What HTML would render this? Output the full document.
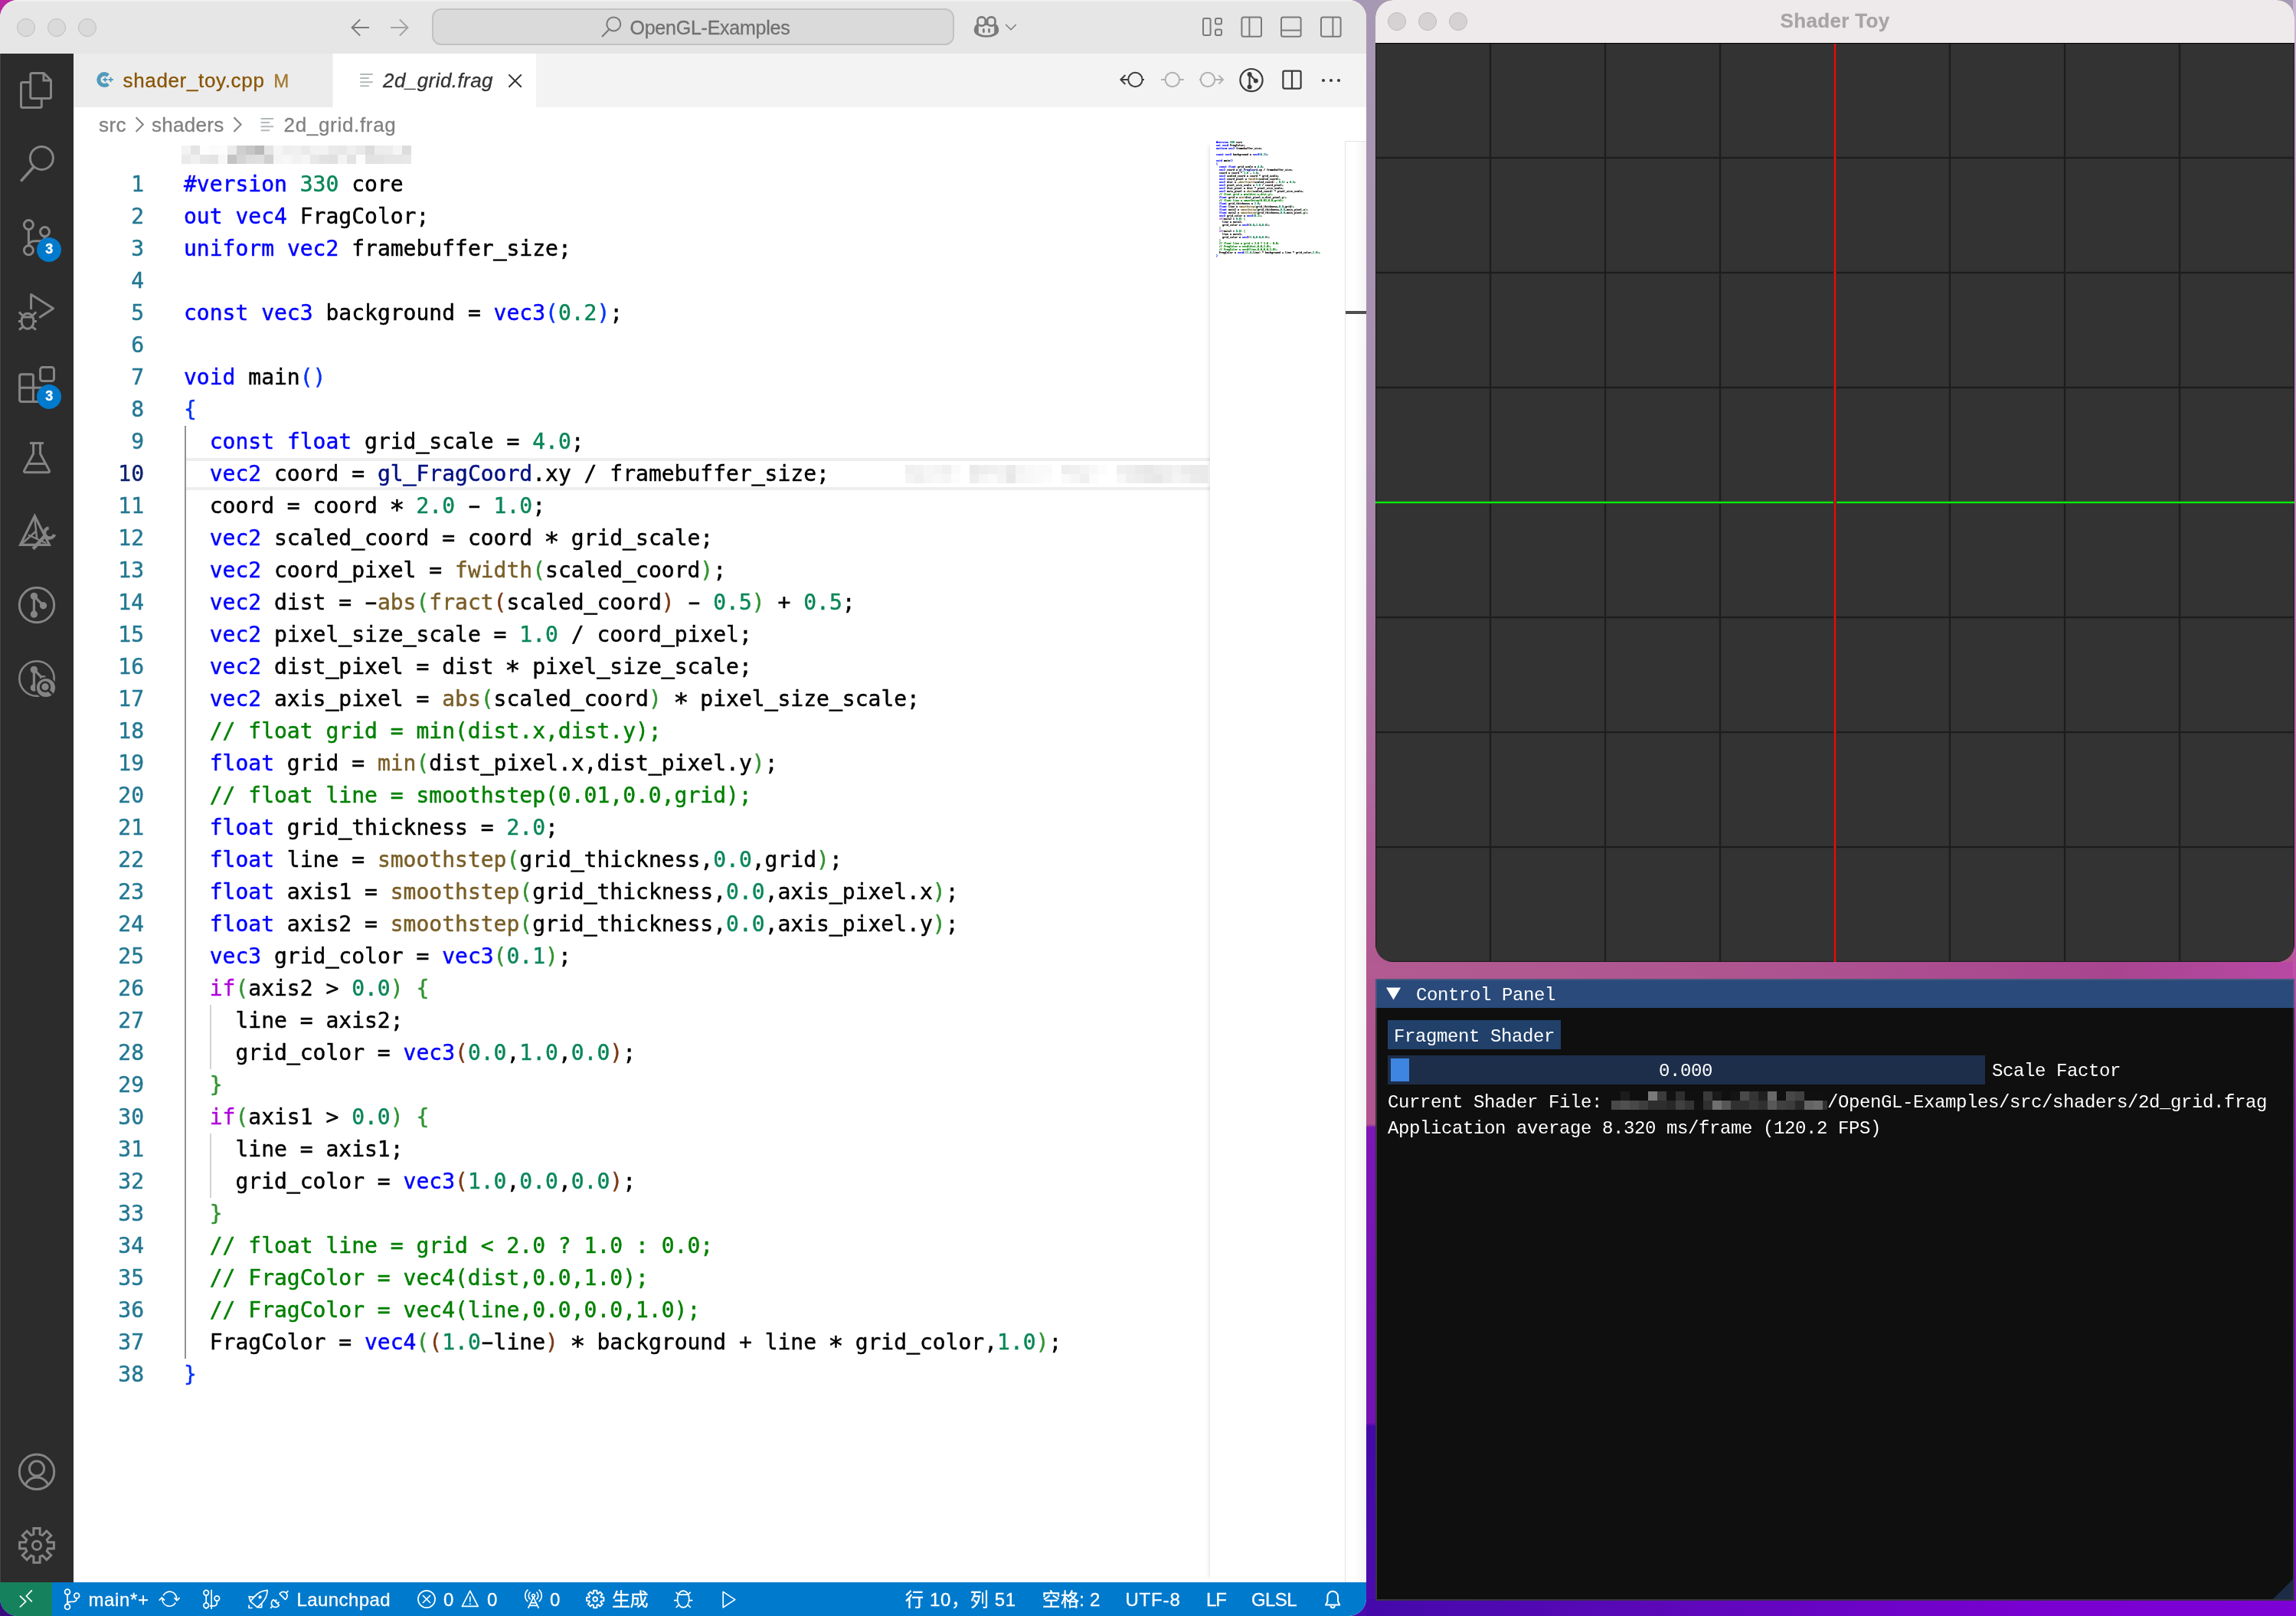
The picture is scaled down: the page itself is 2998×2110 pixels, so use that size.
<!DOCTYPE html>
<html lang="zh-CN">
<head>
<meta charset="utf-8">
<title>2d_grid.frag - OpenGL-Examples</title>
<style>
*{box-sizing:border-box;margin:0;padding:0}
html,body{width:2998px;height:2110px;overflow:hidden}
body{position:relative;font-family:"Liberation Sans","Noto Sans CJK SC",sans-serif;
 background:linear-gradient(to bottom,#a799b3 0,#a68cad 600px,#b0629a 1100px,#b2568f 1300px,#b1548f 1468px,#7c16b7 1472px,#7412b4 1858px,#4409a9 1862px,#4a0bb0 2110px)}
.abs,.lb{position:absolute}
.lb{white-space:pre;display:block;-webkit-text-stroke:0.3px currentColor}
#strip1{position:absolute;left:1784px;top:1256px;width:1214px;height:22px;background:linear-gradient(to right,#b25a91 0,#ae5590 40%,#a8458f 80%,#b848a4 100%)}
#strip2{position:absolute;left:1784px;top:2088px;width:1214px;height:22px;background:linear-gradient(to right,#4409aa 0,#5a08b8 30%,#7800d0 70%,#7d00d6 100%)}
#stripr{position:absolute;left:2994px;top:0;width:4px;height:2110px;background:linear-gradient(to bottom,#c9b6d3 0,#c050a8 1270px,#9a20c0 1500px,#7d00d6 2110px)}
#cornertl{position:absolute;left:0;top:0;width:26px;height:26px;background:#b9259f}
#cornerbl{position:absolute;left:0;top:2084px;width:26px;height:26px;background:#3a0a80}
/* ---------- VS Code ---------- */
#vsc{position:absolute;left:0;top:0;width:1784px;height:2110px;border-radius:23px;overflow:hidden;background:#fff}
#titlebar{position:absolute;left:0;top:0;width:1784px;height:70px;background:#e6e6e6;box-shadow:inset 0 1.5px 0 #f3f3f3}
.tl{position:absolute;top:24px;width:24px;height:24px;border-radius:50%;background:#dadada;border:1px solid #bdbdbd}
#cmd{position:absolute;left:564px;top:11px;width:682px;height:48px;border-radius:12px;background:#dadada;border:2px solid #c2c2c2}
#activity{position:absolute;left:0;top:70px;width:96px;height:1996px;background:#2c2c2c}
#tabs{position:absolute;left:96px;top:70px;width:1688px;height:70px;background:#f3f3f3}
#tab1{position:absolute;left:0;top:0;width:338px;height:70px;background:#ececec}
#tab2{position:absolute;left:339px;top:0;width:265px;height:70px;background:#fff}
#crumbs{position:absolute;left:96px;top:140px;width:1688px;height:44px;background:#fff}
#editor{position:absolute;left:96px;top:184px;width:1688px;height:1882px;background:#fff}
#gutter{will-change:transform;position:absolute;left:0;top:36px;width:92px;text-align:right;color:#237893}
#gutter .act{color:#0b216f}
#code{will-change:transform;position:absolute;left:144px;top:36px;color:#000}
.ln{-webkit-text-stroke:0.45px currentColor;height:42px;line-height:42px;font:28px/42px "DejaVu Sans Mono","Liberation Mono",monospace;white-space:pre}
.k{color:#0000ff}.n{color:#098658}.f{color:#795e26}.c{color:#008000}.p{color:#af00db}.v{color:#001080}
.b1{color:#0431fa}.b2{color:#319331}.b3{color:#7b3814}
#curline{position:absolute;left:145px;top:414px;width:1339px;height:42px;border-top:4px solid #eeeeee;border-bottom:4px solid #eeeeee}
.guide{position:absolute;width:2px;background:#d3d3d3}
#minimap{position:absolute;left:1484px;top:0;width:173px;height:1882px;background:#fff;box-shadow:-6px 0 6px -6px rgba(0,0,0,.18)}
#mini{will-change:transform;position:absolute;left:8px;top:0px;-webkit-text-stroke:3px currentColor;transform-origin:0 0;transform:scale(0.11865,0.095238);color:#000;font-weight:bold}
#ruler{position:absolute;left:1660px;top:0;width:28px;height:1882px;border-left:1px solid #e2e2e2;border-top:1px solid #e2e2e2;background:linear-gradient(to right,#fff 0,#fff 40%,#f4f4f4 100%)}
#rulermark{position:absolute;left:1661px;top:222px;width:27px;height:4px;background:#4f4f4f}
#status{position:absolute;left:0;top:2066px;width:1784px;height:44px;background:#007acc}
#remote{position:absolute;left:0;top:0;width:68px;height:44px;background:#16825d}
.blur{position:absolute}
/* ---------- Shader Toy ---------- */
#toy{position:absolute;left:1796px;top:0;width:1200px;height:1256px;border-radius:23px;overflow:hidden;background:#333}
#toybar{position:absolute;left:0;top:0;width:1200px;height:56px;background:#eeeaeb}
.tl2{position:absolute;top:16px;width:24px;height:24px;border-radius:50%;background:#d6d2d3;border:1px solid #bdb9ba}
#canvas{position:absolute;left:0;top:56px;width:1200px;height:1200px;background:repeating-linear-gradient(to right,#1d1d1d 0 1px,#2f2f2f 1px 2px,#333 2px 148px,#2f2f2f 148px 149px,#1d1d1d 149px 150px),repeating-linear-gradient(to bottom,#1d1d1d 0 1px,#2f2f2f 1px 2px,#333 2px 148px,#2f2f2f 148px 149px,#1d1d1d 149px 150px),#333;background-blend-mode:darken,darken,normal}
#axg{position:absolute;left:0;top:598px;width:1200px;height:4px;background:linear-gradient(to bottom,#2b532b 0 1px,#06ee06 1px 3px,#2b532b 3px 4px)}
#axr{position:absolute;left:598px;top:0;width:4px;height:1200px;background:linear-gradient(to right,#532b2b 0 1px,#f20606 1px 3px,#532b2b 3px 4px)}
/* ---------- ImGui ---------- */
#imgui{will-change:transform;position:absolute;left:1796px;top:1278px;width:1200px;height:812px;background:#0f0f0f;color:#fff;
 font:24px/28px "Liberation Mono","DejaVu Sans Mono",monospace;letter-spacing:-0.4px}
#imtitle{position:absolute;left:0;top:0;width:1200px;height:38px;background:#294a7a}
#imborder{position:absolute;left:0;top:0;width:1200px;height:812px;box-shadow:inset 0 0 0 2px rgba(110,110,128,.42)}
#imgui .t{position:absolute;white-space:pre;height:28px}
#imbtn{position:absolute;left:16px;top:54px;width:226px;height:38px;background:#21416b}
#imslider{position:absolute;left:16px;top:100px;width:780px;height:38px;background:#1d2e4b}
#imgrab{position:absolute;left:20px;top:104px;width:24px;height:30px;background:#3d85e0}
#imgrip{position:absolute;right:2px;bottom:2px;width:0;height:0;border-left:26px solid transparent;border-bottom:26px solid #1c2c46}
svg#ov{position:absolute;left:0;top:0;width:2998px;height:2110px;pointer-events:none}
#labels{position:absolute;left:0;top:0;width:2998px;height:2110px;will-change:transform}
#edge{position:absolute;left:0;top:70px;width:1px;height:1996px;background:#454545}
#mini .ln{-webkit-text-stroke:2.2px currentColor}
#toyline{position:absolute;left:0;top:56px;width:1200px;height:1px;background:#060606}
.ln i{font-style:normal}
.u{position:relative;top:-1.5px;-webkit-text-stroke:1.2px currentColor}
.as{display:inline-block;transform:translateY(5.5px) scale(1.2)}
.hy{display:inline-block;transform:scaleX(1.8)}

</style>
</head>
<body>
<div id="strip1"></div><div id="strip2"></div><div id="stripr"></div><div id="cornertl"></div><div id="cornerbl"></div>
<div id="vsc">
 <div id="titlebar">
  <div class="tl" style="left:22px"></div><div class="tl" style="left:62px"></div><div class="tl" style="left:102px"></div>
  <div id="cmd"></div>
 </div>
 <div id="activity"></div><div id="edge"></div>
 <div id="tabs"><div id="tab1"></div><div id="tab2"></div></div>
 <div id="crumbs"></div>
 <div id="editor">
  <div id="curline"></div>
  <div class="guide" style="left:145px;top:372px;height:1218px;background:#939393"></div>
  <div class="guide" style="left:178px;top:1128px;height:84px"></div>
  <div class="guide" style="left:178px;top:1296px;height:84px"></div>
  <div id="gutter">
<div class="ln">1</div>
<div class="ln">2</div>
<div class="ln">3</div>
<div class="ln">4</div>
<div class="ln">5</div>
<div class="ln">6</div>
<div class="ln">7</div>
<div class="ln">8</div>
<div class="ln">9</div>
<div class="ln act">10</div>
<div class="ln">11</div>
<div class="ln">12</div>
<div class="ln">13</div>
<div class="ln">14</div>
<div class="ln">15</div>
<div class="ln">16</div>
<div class="ln">17</div>
<div class="ln">18</div>
<div class="ln">19</div>
<div class="ln">20</div>
<div class="ln">21</div>
<div class="ln">22</div>
<div class="ln">23</div>
<div class="ln">24</div>
<div class="ln">25</div>
<div class="ln">26</div>
<div class="ln">27</div>
<div class="ln">28</div>
<div class="ln">29</div>
<div class="ln">30</div>
<div class="ln">31</div>
<div class="ln">32</div>
<div class="ln">33</div>
<div class="ln">34</div>
<div class="ln">35</div>
<div class="ln">36</div>
<div class="ln">37</div>
<div class="ln">38</div>
  </div>
  <div id="code">
<div class="ln"><span class="k">#version</span> <span class="n">330</span> core</div>
<div class="ln"><span class="k">out</span> <span class="k">vec4</span> FragColor;</div>
<div class="ln"><span class="k">uniform</span> <span class="k">vec2</span> framebuffer<i class="u">_</i>size;</div>
<div class="ln">&nbsp;</div>
<div class="ln"><span class="k">const</span> <span class="k">vec3</span> background = <span class="k">vec3</span><span class="b1">(</span><span class="n">0.2</span><span class="b1">)</span>;</div>
<div class="ln">&nbsp;</div>
<div class="ln"><span class="k">void</span> main<span class="b1">()</span></div>
<div class="ln"><span class="b1">{</span></div>
<div class="ln">  <span class="k">const</span> <span class="k">float</span> grid<i class="u">_</i>scale = <span class="n">4.0</span>;</div>
<div class="ln">  <span class="k">vec2</span> coord = <span class="v">gl<i class="u">_</i>FragCoord</span>.xy / framebuffer<i class="u">_</i>size;</div>
<div class="ln">  coord = coord <i class="as">*</i> <span class="n">2.0</span> <i class="hy">-</i> <span class="n">1.0</span>;</div>
<div class="ln">  <span class="k">vec2</span> scaled<i class="u">_</i>coord = coord <i class="as">*</i> grid<i class="u">_</i>scale;</div>
<div class="ln">  <span class="k">vec2</span> coord<i class="u">_</i>pixel = <span class="f">fwidth</span><span class="b2">(</span>scaled<i class="u">_</i>coord<span class="b2">)</span>;</div>
<div class="ln">  <span class="k">vec2</span> dist = <i class="hy">-</i><span class="f">abs</span><span class="b2">(</span><span class="f">fract</span><span class="b3">(</span>scaled<i class="u">_</i>coord<span class="b3">)</span> <i class="hy">-</i> <span class="n">0.5</span><span class="b2">)</span> + <span class="n">0.5</span>;</div>
<div class="ln">  <span class="k">vec2</span> pixel<i class="u">_</i>size<i class="u">_</i>scale = <span class="n">1.0</span> / coord<i class="u">_</i>pixel;</div>
<div class="ln">  <span class="k">vec2</span> dist<i class="u">_</i>pixel = dist <i class="as">*</i> pixel<i class="u">_</i>size<i class="u">_</i>scale;</div>
<div class="ln">  <span class="k">vec2</span> axis<i class="u">_</i>pixel = <span class="f">abs</span><span class="b2">(</span>scaled<i class="u">_</i>coord<span class="b2">)</span> <i class="as">*</i> pixel<i class="u">_</i>size<i class="u">_</i>scale;</div>
<div class="ln">  <span class="c">// float grid = min(dist.x,dist.y);</span></div>
<div class="ln">  <span class="k">float</span> grid = <span class="f">min</span><span class="b2">(</span>dist<i class="u">_</i>pixel.x,dist<i class="u">_</i>pixel.y<span class="b2">)</span>;</div>
<div class="ln">  <span class="c">// float line = smoothstep(0.01,0.0,grid);</span></div>
<div class="ln">  <span class="k">float</span> grid<i class="u">_</i>thickness = <span class="n">2.0</span>;</div>
<div class="ln">  <span class="k">float</span> line = <span class="f">smoothstep</span><span class="b2">(</span>grid<i class="u">_</i>thickness,<span class="n">0.0</span>,grid<span class="b2">)</span>;</div>
<div class="ln">  <span class="k">float</span> axis1 = <span class="f">smoothstep</span><span class="b2">(</span>grid<i class="u">_</i>thickness,<span class="n">0.0</span>,axis<i class="u">_</i>pixel.x<span class="b2">)</span>;</div>
<div class="ln">  <span class="k">float</span> axis2 = <span class="f">smoothstep</span><span class="b2">(</span>grid<i class="u">_</i>thickness,<span class="n">0.0</span>,axis<i class="u">_</i>pixel.y<span class="b2">)</span>;</div>
<div class="ln">  <span class="k">vec3</span> grid<i class="u">_</i>color = <span class="k">vec3</span><span class="b2">(</span><span class="n">0.1</span><span class="b2">)</span>;</div>
<div class="ln">  <span class="p">if</span><span class="b2">(</span>axis2 &gt; <span class="n">0.0</span><span class="b2">)</span> <span class="b2">{</span></div>
<div class="ln">    line = axis2;</div>
<div class="ln">    grid<i class="u">_</i>color = <span class="k">vec3</span><span class="b3">(</span><span class="n">0.0</span>,<span class="n">1.0</span>,<span class="n">0.0</span><span class="b3">)</span>;</div>
<div class="ln">  <span class="b2">}</span></div>
<div class="ln">  <span class="p">if</span><span class="b2">(</span>axis1 &gt; <span class="n">0.0</span><span class="b2">)</span> <span class="b2">{</span></div>
<div class="ln">    line = axis1;</div>
<div class="ln">    grid<i class="u">_</i>color = <span class="k">vec3</span><span class="b3">(</span><span class="n">1.0</span>,<span class="n">0.0</span>,<span class="n">0.0</span><span class="b3">)</span>;</div>
<div class="ln">  <span class="b2">}</span></div>
<div class="ln">  <span class="c">// float line = grid &lt; 2.0 ? 1.0 : 0.0;</span></div>
<div class="ln">  <span class="c">// FragColor = vec4(dist,0.0,1.0);</span></div>
<div class="ln">  <span class="c">// FragColor = vec4(line,0.0,0.0,1.0);</span></div>
<div class="ln">  FragColor = <span class="k">vec4</span><span class="b2">(</span><span class="b3">(</span><span class="n">1.0</span><i class="hy">-</i>line<span class="b3">)</span> <i class="as">*</i> background + line <i class="as">*</i> grid<i class="u">_</i>color,<span class="n">1.0</span><span class="b2">)</span>;</div>
<div class="ln"><span class="b1">}</span></div>
  </div>
  <div id="minimap"><div id="mini">
<div class="ln"><span class="k">#version</span> <span class="n">330</span> core</div>
<div class="ln"><span class="k">out</span> <span class="k">vec4</span> FragColor;</div>
<div class="ln"><span class="k">uniform</span> <span class="k">vec2</span> framebuffer_size;</div>
<div class="ln">&nbsp;</div>
<div class="ln"><span class="k">const</span> <span class="k">vec3</span> background = <span class="k">vec3</span><span class="b1">(</span><span class="n">0.2</span><span class="b1">)</span>;</div>
<div class="ln">&nbsp;</div>
<div class="ln"><span class="k">void</span> main<span class="b1">()</span></div>
<div class="ln"><span class="b1">{</span></div>
<div class="ln">  <span class="k">const</span> <span class="k">float</span> grid_scale = <span class="n">4.0</span>;</div>
<div class="ln">  <span class="k">vec2</span> coord = <span class="v">gl_FragCoord</span>.xy / framebuffer_size;</div>
<div class="ln">  coord = coord * <span class="n">2.0</span> - <span class="n">1.0</span>;</div>
<div class="ln">  <span class="k">vec2</span> scaled_coord = coord * grid_scale;</div>
<div class="ln">  <span class="k">vec2</span> coord_pixel = <span class="f">fwidth</span><span class="b2">(</span>scaled_coord<span class="b2">)</span>;</div>
<div class="ln">  <span class="k">vec2</span> dist = -<span class="f">abs</span><span class="b2">(</span><span class="f">fract</span><span class="b3">(</span>scaled_coord<span class="b3">)</span> - <span class="n">0.5</span><span class="b2">)</span> + <span class="n">0.5</span>;</div>
<div class="ln">  <span class="k">vec2</span> pixel_size_scale = <span class="n">1.0</span> / coord_pixel;</div>
<div class="ln">  <span class="k">vec2</span> dist_pixel = dist * pixel_size_scale;</div>
<div class="ln">  <span class="k">vec2</span> axis_pixel = <span class="f">abs</span><span class="b2">(</span>scaled_coord<span class="b2">)</span> * pixel_size_scale;</div>
<div class="ln">  <span class="c">// float grid = min(dist.x,dist.y);</span></div>
<div class="ln">  <span class="k">float</span> grid = <span class="f">min</span><span class="b2">(</span>dist_pixel.x,dist_pixel.y<span class="b2">)</span>;</div>
<div class="ln">  <span class="c">// float line = smoothstep(0.01,0.0,grid);</span></div>
<div class="ln">  <span class="k">float</span> grid_thickness = <span class="n">2.0</span>;</div>
<div class="ln">  <span class="k">float</span> line = <span class="f">smoothstep</span><span class="b2">(</span>grid_thickness,<span class="n">0.0</span>,grid<span class="b2">)</span>;</div>
<div class="ln">  <span class="k">float</span> axis1 = <span class="f">smoothstep</span><span class="b2">(</span>grid_thickness,<span class="n">0.0</span>,axis_pixel.x<span class="b2">)</span>;</div>
<div class="ln">  <span class="k">float</span> axis2 = <span class="f">smoothstep</span><span class="b2">(</span>grid_thickness,<span class="n">0.0</span>,axis_pixel.y<span class="b2">)</span>;</div>
<div class="ln">  <span class="k">vec3</span> grid_color = <span class="k">vec3</span><span class="b2">(</span><span class="n">0.1</span><span class="b2">)</span>;</div>
<div class="ln">  <span class="p">if</span><span class="b2">(</span>axis2 &gt; <span class="n">0.0</span><span class="b2">)</span> <span class="b2">{</span></div>
<div class="ln">    line = axis2;</div>
<div class="ln">    grid_color = <span class="k">vec3</span><span class="b3">(</span><span class="n">0.0</span>,<span class="n">1.0</span>,<span class="n">0.0</span><span class="b3">)</span>;</div>
<div class="ln">  <span class="b2">}</span></div>
<div class="ln">  <span class="p">if</span><span class="b2">(</span>axis1 &gt; <span class="n">0.0</span><span class="b2">)</span> <span class="b2">{</span></div>
<div class="ln">    line = axis1;</div>
<div class="ln">    grid_color = <span class="k">vec3</span><span class="b3">(</span><span class="n">1.0</span>,<span class="n">0.0</span>,<span class="n">0.0</span><span class="b3">)</span>;</div>
<div class="ln">  <span class="b2">}</span></div>
<div class="ln">  <span class="c">// float line = grid &lt; 2.0 ? 1.0 : 0.0;</span></div>
<div class="ln">  <span class="c">// FragColor = vec4(dist,0.0,1.0);</span></div>
<div class="ln">  <span class="c">// FragColor = vec4(line,0.0,0.0,1.0);</span></div>
<div class="ln">  FragColor = <span class="k">vec4</span><span class="b2">(</span><span class="b3">(</span><span class="n">1.0</span>-line<span class="b3">)</span> * background + line * grid_color,<span class="n">1.0</span><span class="b2">)</span>;</div>
<div class="ln"><span class="b1">}</span></div>
  </div></div>
  <div id="ruler"></div><div id="rulermark"></div>
 </div>
 <div id="status"><div id="remote"></div></div>
</div>
<div id="toy">
 <div id="toybar"><div class="tl2" style="left:16px"></div><div class="tl2" style="left:56px"></div><div class="tl2" style="left:96px"></div></div>
 <div id="canvas">
  <div id="axg"></div><div id="axr"></div>
 </div>
 <div id="toyline"></div>
</div>
<div id="imgui">
 <div id="imtitle"></div>
 <div class="t" style="left:53px;top:8px">Control Panel</div>
 <div id="imbtn"></div>
 <div class="t" style="left:24px;top:62px">Fragment Shader</div>
 <div id="imslider"></div><div id="imgrab"></div>
 <div class="t" style="left:370px;top:107px">0.000</div>
 <div class="t" style="left:805px;top:107px">Scale Factor</div>
 <div class="t" style="left:16px;top:148px">Current Shader File: </div>
 <div class="t" style="left:590px;top:148px">/OpenGL-Examples/src/shaders/2d_grid.frag</div>
 <div class="t" style="left:16px;top:182px">Application average 8.320 ms/frame (120.2 FPS)</div>
 <div id="imgrip"></div><div id="imborder"></div>
</div>
<svg id="ov" viewBox="0 0 2998 2110">
<g fill="none" stroke="#858585" stroke-width="3" stroke-linejoin="round"><path d="M41.8,95.5h15.4l9.3,9.3v21.7a2,2 0 0 1-2,2h-22.7a2,2 0 0 1-2-2v-29a2,2 0 0 1 2-2z"/><path d="M57,95.5v9.5h9.5" stroke-linejoin="miter"/><path d="M39.8,107.5h-10.3a2,2 0 0 0-2,2v29a2,2 0 0 0 2,2h22.8a2,2 0 0 0 2-2v-10"/></g>
<g fill="none" stroke="#858585" stroke-width="3" stroke-linejoin="round"><circle cx="54.4" cy="206.4" r="15"/><path d="M44.2,217.8L27.2,236.6" stroke-width="3.6"/></g>
<g fill="none" stroke="#858585" stroke-width="3" stroke-linejoin="round"><circle cx="37.4" cy="293.5" r="6"/><circle cx="58.5" cy="302.6" r="6"/><circle cx="37.4" cy="326.8" r="6"/><path d="M37.4,299.5V320.8"/><path d="M58.5,308.6c0,5.5-3.5,6.2-9,6.2h-3.6c-5,0-8.5,1.8-8.5,6"/></g>
<g fill="none" stroke="#858585" stroke-width="3" stroke-linejoin="round"><path d="M40.6,404V384.4L69.6,402.8L51.2,414.8" stroke-linejoin="round"/><ellipse cx="36" cy="419.3" rx="8" ry="10"/><path d="M28.6,414H43.4M24,419.5h4M44,419.5h4M29.2,411.8l-4.4-4.4M42.8,411.8l4.4-4.4M29.6,427l-4.6,3.6M42.4,427l4.6,3.6"/></g>
<g fill="none" stroke="#858585" stroke-width="3" stroke-linejoin="round"><rect x="52.6" y="479.6" width="17.9" height="18" rx="3"/><path d="M43.4,506.3V491.3a2.5,2.5 0 0 0-2.5-2.5h-12.8a2.5,2.5 0 0 0-2.5,2.5v30.6a2.5,2.5 0 0 0 2.5,2.5h30.6a2.5,2.5 0 0 0 2.5-2.5v-13.1a2.5,2.5 0 0 0-2.5-2.5z"/><path d="M25.6,506.3H43.4V524.4"/></g>
<g fill="none" stroke="#858585" stroke-width="3" stroke-linejoin="round"><path d="M39,578.6H57" stroke-linecap="butt"/><path d="M43.6,579.5V592.5L31.6,614.4a1.6,1.6 0 0 0 1.4,2.4H63a1.6,1.6 0 0 0 1.4-2.4L52.6,592.5V579.5"/><path d="M37.6,605.5H58.6"/></g>
<g fill="none" stroke="#858585" stroke-linejoin="miter"><path d="M45.3,673.6L26.6,711.4H64.4z" stroke-width="3.2"/><path d="M45.3,677L48.2,703.5M28,710.5L46.5,694M37,698.5L60,709" stroke-width="2.4"/><path d="M43.2,716.8L60.5,697.5" stroke-width="4.6"/><path d="M63.6,689.4a6.6,6.6 0 1 0 7.4,8.4" stroke-width="4.4"/></g>
<circle cx="48" cy="790" r="22.7" fill="none" stroke="#858585" stroke-width="3"/><path d="M44.4,778.4V802M44.4,778.4L56.5,790.7" fill="none" stroke="#858585" stroke-width="3.2"/><circle cx="44.4" cy="778.4" r="4.7" fill="#858585"/><circle cx="56.5" cy="790.7" r="4.7" fill="#858585"/><circle cx="44.4" cy="802" r="4.7" fill="#858585"/>
<circle cx="48" cy="886" r="22.7" fill="none" stroke="#858585" stroke-width="2.6"/><path d="M44.4,874.4V898M44.4,874.4L56.5,886.7" fill="none" stroke="#858585" stroke-width="3.2"/><circle cx="44.4" cy="874.4" r="4.7" fill="#858585"/><circle cx="56.5" cy="886.7" r="4.7" fill="#858585"/><circle cx="44.4" cy="898" r="4.7" fill="#858585"/>
<circle cx="60" cy="898" r="14" fill="#2c2c2c"/><circle cx="60" cy="898" r="12.1" fill="#858585"/><circle cx="59" cy="896.8" r="6" fill="none" stroke="#2c2c2c" stroke-width="2.6"/><path d="M63.5,901.5L67.5,905.5" stroke="#2c2c2c" stroke-width="3" stroke-linecap="round"/>
<circle cx="64" cy="326" r="16" fill="#007acc"/>
<circle cx="64" cy="518" r="16" fill="#007acc"/>
<g fill="none" stroke="#858585" stroke-width="3" stroke-linejoin="round"><circle cx="48" cy="1921.8" r="22.7"/><circle cx="48" cy="1917.4" r="9.6"/><path d="M33.6,1937.8A16.2,16.2 0 0 1 62.4,1937.8"/></g>
<g fill="none" stroke="#858585" stroke-width="3" stroke-linejoin="miter"><path d="M52.06,2003.15L52.15,1995.38L43.85,1995.38L43.94,2003.15L40.52,2004.57L35.09,1999.01L29.21,2004.89L34.77,2010.32L33.35,2013.74L25.58,2013.65L25.58,2021.95L33.35,2021.86L34.77,2025.28L29.21,2030.71L35.09,2036.59L40.52,2031.03L43.94,2032.45L43.85,2040.22L52.15,2040.22L52.06,2032.45L55.48,2031.03L60.91,2036.59L66.79,2030.71L61.23,2025.28L62.65,2021.86L70.42,2021.95L70.42,2013.65L62.65,2013.74L61.23,2010.32L66.79,2004.89L60.91,1999.01L55.48,2004.57z"/><circle cx="48" cy="2017.8" r="5.6"/></g>
<path d="M482,36H459.6M470.2,25.4L459.6,36L470.2,46.6" fill="none" stroke="#7a7a7a" stroke-width="2"/>
<path d="M510,36H532.4M521.8,25.4L532.4,36L521.8,46.6" fill="none" stroke="#a2a2a2" stroke-width="2"/>
<circle cx="801.3" cy="31.4" r="9" fill="none" stroke="#7a7a7a" stroke-width="2"/><path d="M795.2,38.6L786,48" stroke="#7a7a7a" stroke-width="2.2"/>
<path d="M1276,31C1272.6,33.4 1271.8,37 1271.8,40C1271.8,45 1279,48.8 1288,48.8C1297,48.8 1304.2,45 1304.2,40C1304.2,37 1303.4,33.4 1300,31z" fill="#7a7a7a"/><path d="M1277.8,33H1298.2V43.2C1295,45.2 1292,46 1288,46C1284,46 1281,45.2 1277.8,43.2z" fill="#e6e6e6"/><rect x="1276.5" y="22.3" width="10.3" height="11.4" rx="4.6" fill="#e6e6e6" stroke="#7a7a7a" stroke-width="2.7"/><rect x="1289.2" y="22.3" width="10.3" height="11.4" rx="4.6" fill="#e6e6e6" stroke="#7a7a7a" stroke-width="2.7"/><path d="M1284.4,38.4v3.2M1291.5,38.4v3.2" stroke="#7a7a7a" stroke-width="2.7" stroke-linecap="round" fill="none"/>
<path d="M1313.2,32L1320,38.8L1326.8,32" fill="none" stroke="#7a7a7a" stroke-width="1.5"/>
<g fill="none" stroke="#7a7a7a" stroke-width="2"><rect x="1571" y="24" width="9.6" height="22" rx="2"/><rect x="1587" y="24" width="8" height="7.6" rx="2"/><rect x="1587" y="38.4" width="8" height="7.6" rx="2"/></g>
<g fill="none" stroke="#7a7a7a" stroke-width="2"><rect x="1621.4" y="22.4" width="25.6" height="25.4" rx="2.5"/><path d="M1631.4,22.4V47.8"/></g>
<g fill="none" stroke="#7a7a7a" stroke-width="2"><rect x="1673" y="22.4" width="25.6" height="25.4" rx="2.5"/><path d="M1673,39.6H1698.6"/></g>
<g fill="none" stroke="#7a7a7a" stroke-width="2"><rect x="1725" y="22.4" width="25.6" height="25.4" rx="2.5"/><path d="M1740.4,22.4V47.8"/></g>
<path d="M141.2,98.6a7.4,7.4 0 1 0 0,11" fill="none" stroke="#519aba" stroke-width="5.2"/><path d="M134.4,104h5.8M137.3,101.1v5.8M141.4,104h6.4M144.6,100.8v6.4" stroke="#519aba" stroke-width="1.8" fill="none"/>
<path d="M470.2,97h16.6M470.2,102h11.6M470.2,107.2h16.6M470.2,112.2h11.6" stroke="#b4b9bb" stroke-width="2" fill="none"/>
<path d="M340.6,155h16.6M340.6,160h11.6M340.6,165.2h16.6M340.6,170.2h11.6" stroke="#b4b9bb" stroke-width="2" fill="none"/>
<path d="M664.4,97.4L680.8,113.8M680.8,97.4L664.4,113.8" stroke="#333" stroke-width="2" fill="none"/>
<path d="M177.6,153.2L186.79999999999998,162.6L177.6,172" stroke="#808080" stroke-width="2" fill="none"/>
<path d="M305.4,153.2L314.59999999999997,162.6L305.4,172" stroke="#808080" stroke-width="2" fill="none"/>
<g fill="none" stroke="#3b3b3b" stroke-width="2"><circle cx="1482.4" cy="104" r="9.2"/><path d="M1473,104H1463.4M1469.4,98L1463.4,104L1469.4,110M1491.6,104h2.4"/></g>
<g fill="none" stroke="#b0b0b0" stroke-width="2"><circle cx="1530.8" cy="104" r="9.2"/><path d="M1516,104h5.6M1540,104h5.8"/></g>
<g fill="none" stroke="#b0b0b0" stroke-width="2"><circle cx="1577" cy="104" r="9.2"/><path d="M1566,104h1.8M1586.2,104H1597M1591.4,98.4L1597,104L1591.4,109.6"/></g>
<g stroke="#3b3b3b" stroke-width="2.2"><circle cx="1634" cy="104.6" r="14.6" fill="none"/><path d="M1631.6,97V113.4M1631.6,97L1639.8,105.6" fill="none"/></g><circle cx="1631.6" cy="97" r="3" fill="#3b3b3b"/><circle cx="1639.8" cy="105.6" r="3" fill="#3b3b3b"/><circle cx="1631.6" cy="113.4" r="3" fill="#3b3b3b"/>
<g fill="none" stroke="#3b3b3b" stroke-width="2.2"><rect x="1675.4" y="92.6" width="23.2" height="23" rx="2"/><path d="M1687,92.6V115.6"/></g>
<circle cx="1728" cy="105" r="2.1" fill="#3b3b3b"/>
<circle cx="1738" cy="105" r="2.1" fill="#3b3b3b"/>
<circle cx="1748" cy="105" r="2.1" fill="#3b3b3b"/>
<g fill="none" stroke="#fff" stroke-width="1.7"><path d="M25.9,2083.7L33.7,2091.1L25.9,2098.5M41.8,2076.4L34.4,2084L41.8,2091.4"/></g>
<g fill="none" stroke="#fff" stroke-width="1.8"><circle cx="88" cy="2078.6" r="3.4"/><circle cx="88" cy="2097.9" r="3.4"/><circle cx="100.2" cy="2083.5" r="3.4"/><path d="M88,2082V2094.5M100.2,2086.9c0,3.6-2.6,4.4-5.6,4.4h-2c-2.8,0-4.6,1-4.6,3.2"/></g>
<g fill="none" stroke="#fff" stroke-width="1.7"><path d="M213.2,2083.3A9.2,9.2 0 0 1 230.6,2088.4M212,2087.6A9.2,9.2 0 0 0 229.2,2092.5"/><path d="M227.4,2086.2L231,2089.9L234.6,2086.2M207.8,2089.6L211.4,2085.9L215,2089.6"/></g>
<g fill="none" stroke="#fff" stroke-width="1.7"><circle cx="269.2" cy="2079.7" r="3.3"/><circle cx="269.2" cy="2096.2" r="3.3"/><circle cx="283.3" cy="2087.1" r="3.3"/><path d="M269.2,2083V2092.9M276.1,2075.8V2100.9M283.3,2090.4V2092.4Q283.3,2096.8 279,2096.8H274M269.2,2099.5v1.6"/></g>
<g fill="none" stroke="#fff" stroke-width="1.7"><path d="M349.1,2076.3C342,2076.8 336,2080 331.7,2085.4L326.9,2090.9L335.9,2098.7L341.7,2093.3C346.5,2088.5 349,2083 349.1,2076.3z" stroke-linejoin="round"/><path d="M331.7,2085.4L325.1,2084.6L326.8,2090.8M335.9,2098.7H341.7V2093.3M325.1,2095.4V2099.5H329.7" stroke-linejoin="round"/><circle cx="339.6" cy="2085.4" r="2.1" fill="#fff" stroke="none"/></g>
<g fill="none" stroke="#fff" stroke-width="1.7"><path d="M357.1,2088.6L364.4,2095.9L363.3,2097.1A5.2,5.2 0 0 1 355.9,2089.7zM365.1,2081.1L372.4,2088.4L373.6,2087.3A5.2,5.2 0 0 0 366.2,2079.9z" stroke-linejoin="round"/><path d="M359.2,2090.7L361.3,2088.6M362.3,2093.8L364.4,2091.7M355.9,2097.1L353.1,2099.9M373.6,2079.9L376.4,2077.1"/></g>
<g fill="none" stroke="#fff" stroke-width="1.7"><circle cx="557" cy="2088" r="11.1"/><path d="M552,2083L562,2093M562,2083L552,2093"/></g>
<g fill="none" stroke="#fff" stroke-width="1.7"><path d="M613.8,2077.2L603.4,2097.4H624.2z" stroke-linejoin="round"/><path d="M613.8,2084.4v7M613.8,2093.2v2"/></g>
<g fill="none" stroke="#fff" stroke-width="1.7"><path d="M696.5,2085.6L689.6,2099.8M696.5,2085.6L703.4,2099.8M692.9,2092.8H700.1M691.2,2096.4H701.8"/><circle cx="696.5" cy="2083.4" r="1.9"/><path d="M692.6,2088.2a6,6 0 0 1 0-9.6M700.4,2088.2a6,6 0 0 0 0-9.6M689.4,2091.2a10.2,10.2 0 0 1 0-15.6M703.6,2091.2a10.2,10.2 0 0 0 0-15.6"/></g>
<g fill="none" stroke="#fff" stroke-width="1.9"><path d="M779.54,2080.35L779.38,2076.81L775.02,2076.81L774.86,2080.35L773.44,2080.94L770.83,2078.55L767.75,2081.63L770.14,2084.24L769.55,2085.66L766.01,2085.82L766.01,2090.18L769.55,2090.34L770.14,2091.76L767.75,2094.37L770.83,2097.45L773.44,2095.06L774.86,2095.65L775.02,2099.19L779.38,2099.19L779.54,2095.65L780.96,2095.06L783.57,2097.45L786.65,2094.37L784.26,2091.76L784.85,2090.34L788.39,2090.18L788.39,2085.82L784.85,2085.66L784.26,2084.24L786.65,2081.63L783.57,2078.55L780.96,2080.94z" stroke-linejoin="round"/><circle cx="777.2" cy="2088" r="2.8"/></g>
<g fill="none" stroke="#fff" stroke-width="1.7"><ellipse cx="892.2" cy="2088" rx="7.6" ry="10.9"/><path d="M885.6,2082.2H898.8M880,2089.6h4.6M899.8,2089.6h4.6M886.4,2082.4l-3.8,-3.6M898,2082.4l3.8,-3.6M886.2,2095.6l-3.6,3.4M898.2,2095.6l3.6,3.4"/></g>
<g fill="none" stroke="#fff" stroke-width="1.7"><path d="M944.2,2078.4V2098.8L959.8,2088.6z" stroke-linejoin="round"/></g>
<g fill="none" stroke="#fff" stroke-width="2"><path d="M1731,2095.6h18.4l-2.4-4.6v-6.4a6.8,6.8 0 0 0-13.6,0v6.4z" stroke-linejoin="round"/><path d="M1737.6,2096.6a2.6,2.6 0 0 0 5.2,0"/></g>
<polygon points="1810,1289.4 1829,1289.4 1819.5,1305.4" fill="#fff"/>
<rect x="237" y="190" width="12" height="12" fill="#f3f3f3"/><rect x="249" y="190" width="12" height="12" fill="#e4e4e4"/><rect x="261" y="190" width="12" height="12" fill="#fefefe"/><rect x="273" y="190" width="12" height="12" fill="#fbfbfb"/><rect x="285" y="190" width="12" height="12" fill="#fcfcfc"/><rect x="297" y="190" width="12" height="12" fill="#ebebeb"/><rect x="309" y="190" width="12" height="12" fill="#cfcfcf"/><rect x="321" y="190" width="12" height="12" fill="#c6c6c6"/><rect x="333" y="190" width="12" height="12" fill="#b9b9b9"/><rect x="345" y="190" width="12" height="12" fill="#e4e4e4"/><rect x="357" y="190" width="12" height="12" fill="#f6f6f6"/><rect x="369" y="190" width="12" height="12" fill="#eeeeee"/><rect x="381" y="190" width="12" height="12" fill="#f0f0f0"/><rect x="393" y="190" width="12" height="12" fill="#eaeaea"/><rect x="405" y="190" width="12" height="12" fill="#f2f2f2"/><rect x="417" y="190" width="12" height="12" fill="#f3f3f3"/><rect x="429" y="190" width="12" height="12" fill="#eaeaea"/><rect x="441" y="190" width="12" height="12" fill="#e8e8e8"/><rect x="453" y="190" width="12" height="12" fill="#efefef"/><rect x="465" y="190" width="12" height="12" fill="#e9e9e9"/><rect x="477" y="190" width="12" height="12" fill="#dcdcdc"/><rect x="489" y="190" width="12" height="12" fill="#ececec"/><rect x="501" y="190" width="12" height="12" fill="#ededed"/><rect x="513" y="190" width="12" height="12" fill="#f5f5f5"/><rect x="525" y="190" width="12" height="12" fill="#dddddd"/><rect x="237" y="202" width="12" height="12" fill="#eaeaea"/><rect x="249" y="202" width="12" height="12" fill="#f0f0f0"/><rect x="261" y="202" width="12" height="12" fill="#e6e6e6"/><rect x="273" y="202" width="12" height="12" fill="#e4e4e4"/><rect x="285" y="202" width="12" height="12" fill="#f7f7f7"/><rect x="297" y="202" width="12" height="12" fill="#c3c3c3"/><rect x="309" y="202" width="12" height="12" fill="#d4d4d4"/><rect x="321" y="202" width="12" height="12" fill="#dddddd"/><rect x="333" y="202" width="12" height="12" fill="#dfdfdf"/><rect x="345" y="202" width="12" height="12" fill="#d0d0d0"/><rect x="357" y="202" width="12" height="12" fill="#f5f5f5"/><rect x="369" y="202" width="12" height="12" fill="#f7f7f7"/><rect x="381" y="202" width="12" height="12" fill="#f2f2f2"/><rect x="393" y="202" width="12" height="12" fill="#f5f5f5"/><rect x="405" y="202" width="12" height="12" fill="#e8e8e8"/><rect x="417" y="202" width="12" height="12" fill="#e2e2e2"/><rect x="429" y="202" width="12" height="12" fill="#e0e0e0"/><rect x="441" y="202" width="12" height="12" fill="#f3f3f3"/><rect x="453" y="202" width="12" height="12" fill="#e3e3e3"/><rect x="465" y="202" width="12" height="12" fill="#fcfcfc"/><rect x="477" y="202" width="12" height="12" fill="#e2e2e2"/><rect x="489" y="202" width="12" height="12" fill="#e3e3e3"/><rect x="501" y="202" width="12" height="12" fill="#e6e6e6"/><rect x="513" y="202" width="12" height="12" fill="#e6e6e6"/><rect x="525" y="202" width="12" height="12" fill="#e8e8e8"/>
<rect x="1182" y="607" width="12" height="12" fill="#f0f0f0"/><rect x="1194" y="607" width="12" height="12" fill="#f2f2f2"/><rect x="1206" y="607" width="12" height="12" fill="#f6f6f6"/><rect x="1218" y="607" width="12" height="12" fill="#f4f4f4"/><rect x="1230" y="607" width="12" height="12" fill="#f0f0f0"/><rect x="1242" y="607" width="12" height="12" fill="#fafafa"/><rect x="1254" y="607" width="12" height="12" fill="#ffffff"/><rect x="1266" y="607" width="12" height="12" fill="#eaeaea"/><rect x="1278" y="607" width="12" height="12" fill="#eeeeee"/><rect x="1290" y="607" width="12" height="12" fill="#f0f0f0"/><rect x="1302" y="607" width="12" height="12" fill="#f2f2f2"/><rect x="1314" y="607" width="12" height="12" fill="#eaeaea"/><rect x="1326" y="607" width="12" height="12" fill="#f4f4f4"/><rect x="1338" y="607" width="12" height="12" fill="#f8f8f8"/><rect x="1350" y="607" width="12" height="12" fill="#fafafa"/><rect x="1362" y="607" width="12" height="12" fill="#fafafa"/><rect x="1374" y="607" width="12" height="12" fill="#ffffff"/><rect x="1386" y="607" width="12" height="12" fill="#eeeeee"/><rect x="1398" y="607" width="12" height="12" fill="#f0f0f0"/><rect x="1410" y="607" width="12" height="12" fill="#f4f4f4"/><rect x="1422" y="607" width="12" height="12" fill="#f8f8f8"/><rect x="1434" y="607" width="12" height="12" fill="#fcfcfc"/><rect x="1446" y="607" width="12" height="12" fill="#ffffff"/><rect x="1458" y="607" width="12" height="12" fill="#f0f0f0"/><rect x="1470" y="607" width="12" height="12" fill="#eeeeee"/><rect x="1482" y="607" width="12" height="12" fill="#eaeaea"/><rect x="1494" y="607" width="12" height="12" fill="#e8e8e8"/><rect x="1506" y="607" width="12" height="12" fill="#ececec"/><rect x="1518" y="607" width="12" height="12" fill="#eeeeee"/><rect x="1530" y="607" width="12" height="12" fill="#f2f2f2"/><rect x="1542" y="607" width="12" height="12" fill="#ececec"/><rect x="1554" y="607" width="12" height="12" fill="#eaeaea"/><rect x="1566" y="607" width="12" height="12" fill="#eaeaea"/><rect x="1182" y="619" width="12" height="12" fill="#f4f4f4"/><rect x="1194" y="619" width="12" height="12" fill="#f0f0f0"/><rect x="1206" y="619" width="12" height="12" fill="#f6f6f6"/><rect x="1218" y="619" width="12" height="12" fill="#f8f8f8"/><rect x="1230" y="619" width="12" height="12" fill="#f6f6f6"/><rect x="1242" y="619" width="12" height="12" fill="#fcfcfc"/><rect x="1254" y="619" width="12" height="12" fill="#ffffff"/><rect x="1266" y="619" width="12" height="12" fill="#eeeeee"/><rect x="1278" y="619" width="12" height="12" fill="#f6f6f6"/><rect x="1290" y="619" width="12" height="12" fill="#fafafa"/><rect x="1302" y="619" width="12" height="12" fill="#f4f4f4"/><rect x="1314" y="619" width="12" height="12" fill="#e8e8e8"/><rect x="1326" y="619" width="12" height="12" fill="#f6f6f6"/><rect x="1338" y="619" width="12" height="12" fill="#f8f8f8"/><rect x="1350" y="619" width="12" height="12" fill="#fafafa"/><rect x="1362" y="619" width="12" height="12" fill="#fcfcfc"/><rect x="1374" y="619" width="12" height="12" fill="#ffffff"/><rect x="1386" y="619" width="12" height="12" fill="#fafafa"/><rect x="1398" y="619" width="12" height="12" fill="#f6f6f6"/><rect x="1410" y="619" width="12" height="12" fill="#f0f0f0"/><rect x="1422" y="619" width="12" height="12" fill="#fcfcfc"/><rect x="1434" y="619" width="12" height="12" fill="#ffffff"/><rect x="1446" y="619" width="12" height="12" fill="#ffffff"/><rect x="1458" y="619" width="12" height="12" fill="#f8f8f8"/><rect x="1470" y="619" width="12" height="12" fill="#f0f0f0"/><rect x="1482" y="619" width="12" height="12" fill="#eeeeee"/><rect x="1494" y="619" width="12" height="12" fill="#eaeaea"/><rect x="1506" y="619" width="12" height="12" fill="#e8e8e8"/><rect x="1518" y="619" width="12" height="12" fill="#eeeeee"/><rect x="1530" y="619" width="12" height="12" fill="#f4f4f4"/><rect x="1542" y="619" width="12" height="12" fill="#f2f2f2"/><rect x="1554" y="619" width="12" height="12" fill="#ececec"/><rect x="1566" y="619" width="12" height="12" fill="#eaeaea"/>
<rect x="2104" y="1425" width="12" height="12" fill="#0f0f0f"/><rect x="2116" y="1425" width="12" height="12" fill="#1c1c1c"/><rect x="2128" y="1425" width="12" height="12" fill="#0f0f0f"/><rect x="2140" y="1425" width="12" height="12" fill="#0f0f0f"/><rect x="2152" y="1425" width="12" height="12" fill="#7a7a7a"/><rect x="2164" y="1425" width="12" height="12" fill="#3c3c3c"/><rect x="2176" y="1425" width="12" height="12" fill="#121212"/><rect x="2188" y="1425" width="12" height="12" fill="#2e2e2e"/><rect x="2200" y="1425" width="12" height="12" fill="#101010"/><rect x="2212" y="1425" width="12" height="12" fill="#101010"/><rect x="2224" y="1425" width="12" height="12" fill="#3a3a3a"/><rect x="2236" y="1425" width="12" height="12" fill="#1a1a1a"/><rect x="2248" y="1425" width="12" height="12" fill="#101010"/><rect x="2260" y="1425" width="12" height="12" fill="#141414"/><rect x="2272" y="1425" width="12" height="12" fill="#4a4a4a"/><rect x="2284" y="1425" width="12" height="12" fill="#343434"/><rect x="2296" y="1425" width="12" height="12" fill="#202020"/><rect x="2308" y="1425" width="12" height="12" fill="#686868"/><rect x="2320" y="1425" width="12" height="12" fill="#101010"/><rect x="2332" y="1425" width="12" height="12" fill="#484848"/><rect x="2344" y="1425" width="12" height="12" fill="#404040"/><rect x="2356" y="1425" width="12" height="12" fill="#101010"/><rect x="2368" y="1425" width="12" height="12" fill="#101010"/><rect x="2104" y="1437" width="12" height="12" fill="#4a4a4a"/><rect x="2116" y="1437" width="12" height="12" fill="#505050"/><rect x="2128" y="1437" width="12" height="12" fill="#484848"/><rect x="2140" y="1437" width="12" height="12" fill="#3e3e3e"/><rect x="2152" y="1437" width="12" height="12" fill="#2e2e2e"/><rect x="2164" y="1437" width="12" height="12" fill="#2e2e2e"/><rect x="2176" y="1437" width="12" height="12" fill="#282828"/><rect x="2188" y="1437" width="12" height="12" fill="#404040"/><rect x="2200" y="1437" width="12" height="12" fill="#343434"/><rect x="2212" y="1437" width="12" height="12" fill="#121212"/><rect x="2224" y="1437" width="12" height="12" fill="#303030"/><rect x="2236" y="1437" width="12" height="12" fill="#707070"/><rect x="2248" y="1437" width="12" height="12" fill="#565656"/><rect x="2260" y="1437" width="12" height="12" fill="#303030"/><rect x="2272" y="1437" width="12" height="12" fill="#303030"/><rect x="2284" y="1437" width="12" height="12" fill="#383838"/><rect x="2296" y="1437" width="12" height="12" fill="#303030"/><rect x="2308" y="1437" width="12" height="12" fill="#585858"/><rect x="2320" y="1437" width="12" height="12" fill="#404040"/><rect x="2332" y="1437" width="12" height="12" fill="#3c3c3c"/><rect x="2344" y="1437" width="12" height="12" fill="#282828"/><rect x="2356" y="1437" width="12" height="12" fill="#646464"/><rect x="2368" y="1437" width="12" height="12" fill="#6a6a6a"/>
<rect x="2380" y="1437" width="6" height="12" fill="#303030"/>

</svg>
<div id="labels">
<span class="lb" style="left:822.50px;top:18.84px;font-size:25px;line-height:35px;color:#707070;letter-spacing:-0.241px;">OpenGL-Examples</span>
<span class="lb" style="left:160.50px;top:87.49px;font-size:26px;line-height:36px;color:#895503;letter-spacing:0.653px;">shader_toy.cpp</span>
<span class="lb" style="left:357.30px;top:89.18px;font-size:24px;line-height:34px;color:#a3782f;letter-spacing:-1.500px;">M</span>
<span class="lb" style="left:500.00px;top:87.49px;font-size:26px;line-height:36px;color:#333333;letter-spacing:0.436px;font-style:italic;">2d_grid.frag</span>
<span class="lb" style="left:129.00px;top:144.99px;font-size:26px;line-height:36px;color:#808080;letter-spacing:0.443px;">src</span>
<span class="lb" style="left:198.00px;top:144.99px;font-size:26px;line-height:36px;color:#808080;letter-spacing:0.286px;">shaders</span>
<span class="lb" style="left:370.50px;top:144.99px;font-size:26px;line-height:36px;color:#808080;letter-spacing:0.686px;">2d_grid.frag</span>
<span class="lb" style="left:115.50px;top:2071.68px;font-size:24px;line-height:34px;color:#fff;letter-spacing:0.604px;">main*+</span>
<span class="lb" style="left:387.50px;top:2071.68px;font-size:24px;line-height:34px;color:#fff;letter-spacing:0.413px;">Launchpad</span>
<span class="lb" style="left:579.00px;top:2071.68px;font-size:24px;line-height:34px;color:#fff;letter-spacing:-0.359px;">0</span>
<span class="lb" style="left:636.00px;top:2071.68px;font-size:24px;line-height:34px;color:#fff;letter-spacing:-0.359px;">0</span>
<span class="lb" style="left:718.00px;top:2071.68px;font-size:24px;line-height:34px;color:#fff;letter-spacing:-0.359px;">0</span>
<span class="lb" style="left:799.00px;top:2071.68px;font-size:24px;line-height:34px;color:#fff;letter-spacing:-0.500px;">生成</span>
<span class="lb" style="left:1182.00px;top:2071.68px;font-size:24px;line-height:34px;color:#fff;letter-spacing:0.663px;">行 10，列 51</span>
<span class="lb" style="left:1360.70px;top:2071.68px;font-size:24px;line-height:34px;color:#fff;letter-spacing:0.222px;">空格: 2</span>
<span class="lb" style="left:1469.40px;top:2071.68px;font-size:24px;line-height:34px;color:#fff;letter-spacing:0.840px;">UTF-8</span>
<span class="lb" style="left:1575.00px;top:2071.68px;font-size:24px;line-height:34px;color:#fff;letter-spacing:-1.008px;">LF</span>
<span class="lb" style="left:1634.00px;top:2071.68px;font-size:24px;line-height:34px;color:#fff;letter-spacing:-0.594px;">GLSL</span>
<span class="lb" style="left:2324.50px;top:8.99px;font-size:26px;line-height:36px;color:#a8a4a5;letter-spacing:0.333px;font-weight:bold;">Shader Toy</span>
<span class="lb" style="left:59.20px;top:313.26px;font-size:18px;line-height:25px;color:#fff;letter-spacing:-0.016px;font-weight:bold;">3</span>
<span class="lb" style="left:59.20px;top:505.26px;font-size:18px;line-height:25px;color:#fff;letter-spacing:-0.016px;font-weight:bold;">3</span>
</div>

</body>
</html>
